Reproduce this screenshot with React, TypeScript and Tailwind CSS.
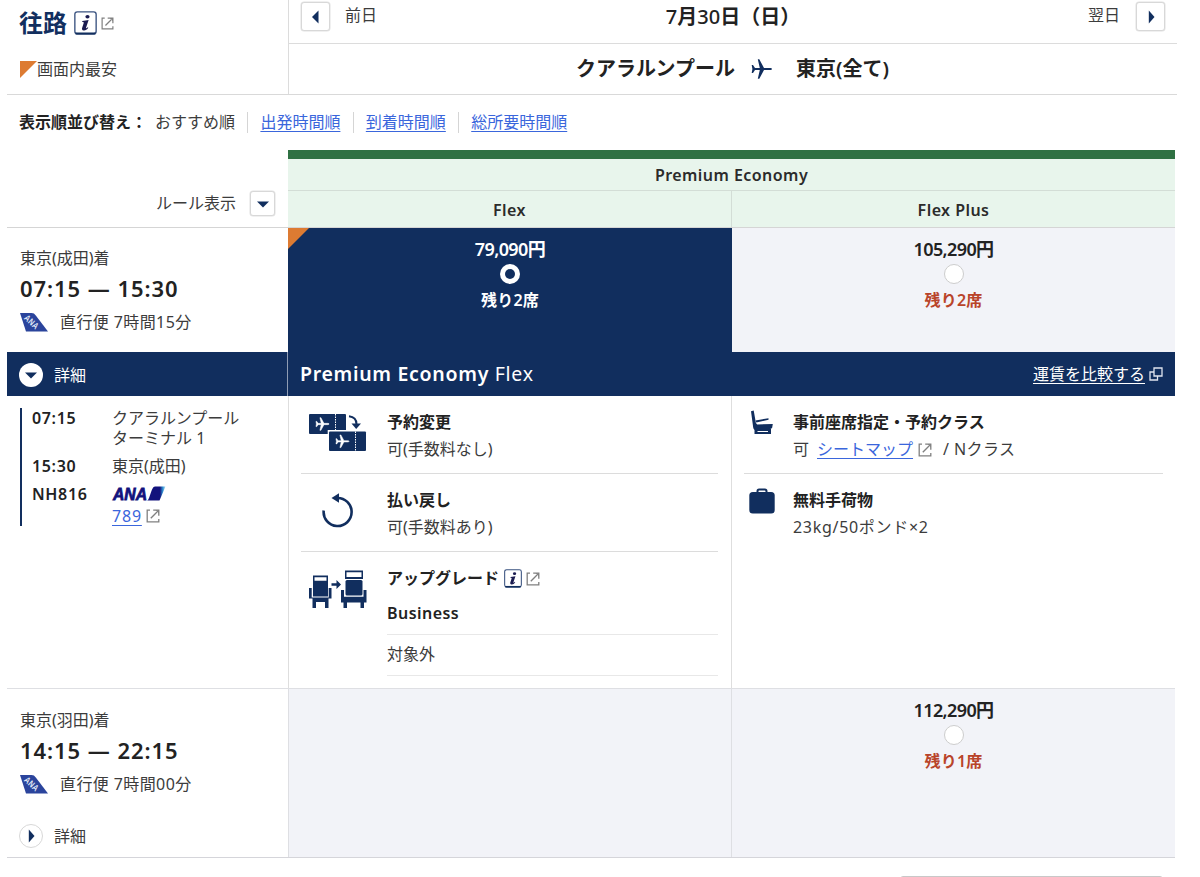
import React from "react";

const NAVY = "#112e5e";

function InfoIcon({ size }: { size: number }) {
  return (
    <svg width={size} height={size + 1} viewBox="0 0 22 23" className="shrink-0">
      <rect x="0.8" y="0.8" width="20.4" height="21" rx="2.4" fill="#fff" stroke="#3a5380" strokeWidth="1.3" />
      <path d="M1.5 21.6h19" stroke={NAVY} strokeWidth="2" />
      <ellipse cx="12.9" cy="5.6" rx="2" ry="1.700" fill="#1b1b50" />
      <path d="M8 9.600l6-.9-2.500 7.400c-.2.8.5.7 1.600-.5l.6.5c-1.300 2-2.900 2.800-4.500 2.600-1.500-.2-1.900-1.200-1.400-2.600l1.500-4.500c.2-.8-.2-1.100-1.500-1.100z" fill="#1b1b50" />
    </svg>
  );
}

function ExternalIcon({ size }: { size: number }) {
  return (
    <svg width={size} height={size} viewBox="0 0 14 14" className="shrink-0" fill="none" stroke="#808080" strokeWidth="1.300">
      <path d="M4 1.200H1.200v11.600h11.600V10" />
      <path d="M4.800 9.200L11 3" />
      <path d="M7.200 1.200h5.600v5.600" />
      <path d="M9.500 1.200h3.300v3.300z" fill="#808080" stroke="none" />
    </svg>
  );
}

function Arrow({ dir }: { dir: "left" | "right" | "down" }) {
  const d = { left: "M9.500 0.500v13L3 7z", right: "M4.800 0.500v13L10.500 7z", down: "M1 4.500h12L7 10.500z" }[dir];
  return (
    <svg width="14" height="14" viewBox="0 0 14 14">
      <path d={d} fill={NAVY} />
    </svg>
  );
}

function SquareButton({ dir, className }: { dir: "left" | "right" | "down"; className: string }) {
  return (
    <button className={"flex shrink-0 items-center justify-center rounded-[3px] border-[1.5px] border-[#d8d8d8] bg-white shadow-[0_0_0_0.5px_#e2e2e2] " + className}>
      <Arrow dir={dir} />
    </button>
  );
}

const PLANE = "M21 10c0-.6-1-1-2.200-1H13L8.300 0.300H6.800L8.800 9H4L2 6H.700L1.400 10 .7 14H2L4 11h4.800L6.800 19.700h1.500L13 11h5.800C20 11 21 10.600 21 10z";

function TailIcon() {
  return (
    <svg width="28" height="19" viewBox="0 0 28 19" className="shrink-0 overflow-visible">
      <path d="M0 0h11.500c2 0 3 .8 4.300 2.500L28 18.500H6z" fill="#2b449c" />
      <text x="0" y="0" transform="translate(3.400 5.800) rotate(42)" fontSize="9" fontWeight="700" fontFamily="Liberation Sans, sans-serif" fill="#dfe4f5" textLength="16.500" lengthAdjust="spacingAndGlyphs">ANA</text>
    </svg>
  );
}

function AnaLogo() {
  return (
    <svg width="56" height="17" viewBox="-1 -1 56 17" className="-ml-px -mt-px -mb-px overflow-visible">
      <defs>
        <linearGradient id="fin" x1="0" x2="1">
          <stop offset="0.700" stopColor="#12127c" />
          <stop offset="0.850" stopColor="#2f8fd0" />
          <stop offset="1" stopColor="#bfe6f8" />
        </linearGradient>
      </defs>
      <text x="1" y="14" fontSize="16.500" fontWeight="700" fontStyle="italic" fontFamily="Liberation Sans, sans-serif" fill="#12127c" stroke="#12127c" strokeWidth="0.800" textLength="34" lengthAdjust="spacingAndGlyphs">ANA</text>
      <path d="M35 14.500c3 0 4-14 8-14h10.500L47.500 14.500z" fill="url(#fin)" />
    </svg>
  );
}

function TicketsIcon() {
  return (
    <svg width="58" height="38" viewBox="0 0 58 38">
      <rect x="0" y="0" width="37" height="20" rx="1" fill={NAVY} />
      <path d="M26.500 0v20" stroke="#fff" strokeDasharray="1.500 1" />
      <path d={PLANE} fill="#fff" stroke="#fff" strokeWidth="0.800" transform="translate(6.500 3.500) scale(.65)" />
      <rect x="18.700" y="16" width="39.300" height="22" fill="#fff" />
      <rect x="20" y="17.500" width="37" height="19.500" rx="1" fill={NAVY} />
      <path d="M46.500 17.500v20" stroke="#fff" strokeDasharray="1.500 1" />
      <path d={PLANE} fill="#fff" stroke="#fff" strokeWidth="0.800" transform="translate(26.500 20.800) scale(.65)" />
      <path d="M40 2.300c4.800.5 7.500 3 7.500 8" fill="none" stroke={NAVY} strokeWidth="2" />
      <path d="M42.500 9.500h9.500L47.200 15z" fill={NAVY} />
    </svg>
  );
}

function RefundIcon() {
  return (
    <svg width="32" height="35" viewBox="0 0 32 35">
      <path d="M1.700 17.500A14 14 0 1 0 15 5" fill="none" stroke={NAVY} strokeWidth="2.600" />
      <path d="M9.500 5L17 .3v9.400z" fill={NAVY} />
    </svg>
  );
}

function UpgradeIcon() {
  return (
    <svg width="58" height="38" viewBox="0 0 58 38" fill={NAVY}>
      <path d="M4 5.500h15v21H4zM5.500 7.300v3.400h12V7.300z" fillRule="evenodd" />
      <path d="M0 18h2.700v9.500h17V18h2.800v10.500h-3V38H16v-6H7v6H3.500v-9.500H0z" />
      <path d="M36 .5h18v8.500H36zM37.500 2.300v4.700h15V2.300z" fillRule="evenodd" />
      <rect x="36.500" y="10" width="17" height="15.500" rx="1.500" />
      <path d="M32 20h3v6.800h19.500V20h3v12.500h-2.500V38h-3.500v-5.500H38V38h-3.500v-5.500H32z" />
      <path d="M22.500 13.200h5V10l4.500 4.500-4.500 4.500v-3.200h-5z" />
    </svg>
  );
}

function SeatIcon() {
  return (
    <svg width="24" height="25" viewBox="0 0 24 25" fill={NAVY}>
      <path d="M1 1.200l2.700-.7 2.200 12.500 1.300 1.500 15.600-.5-.7 4-3 1.700-13.600.2C4 19.900 3.500 19 3.200 17.500z" />
      <path d="M5.500 10.500l13-2.300v1.500L6.300 12.500z" />
      <path d="M4.500 19h16.500v5H4.500zM7.500 21v1h10.500v-1z" fillRule="evenodd" />
    </svg>
  );
}

function BagIcon() {
  return (
    <svg width="26" height="26" viewBox="0 0 26 26">
      <path d="M8.500 5.500V3.200c0-1 .6-1.700 1.600-1.700h5.800c1 0 1.600.7 1.600 1.700v2.300" fill="none" stroke={NAVY} strokeWidth="2" />
      <rect x="0.300" y="4" width="25.400" height="21.500" rx="3.500" fill={NAVY} />
    </svg>
  );
}

function Fare({ price, seats, selected }: { price: string; seats: string; selected?: boolean }) {
  return (
    <div className="flex flex-col items-center pt-2">
      <div className={"h-[26px] text-lg leading-[27px] font-semibold tracking-[-0.600px] " + (selected ? "text-white" : "text-[#222]")}>{price}</div>
      <div className={"mt-[1.500px] size-5 rounded-full bg-white " + (selected ? "flex items-center justify-center" : "border-[1.500px] border-[#cdcdcd]")}>
        {selected && <div className="size-[10px] rounded-full bg-[#112e5e]" />}
      </div>
      <div className={"mt-[3.500px] text-base leading-[26px] font-semibold tracking-[0.200px] " + (selected ? "text-white" : "text-[#b9442a]")}>{seats}</div>
    </div>
  );
}

function FlightInfo({ arrival, times, duration }: { arrival: string; times: string; duration: string }) {
  return (
    <div className="pl-[13px]">
      <div className="pt-[18px] text-base leading-6">{arrival}</div>
      <div className="mt-1 text-[22px] leading-7 font-semibold tracking-[0.950px] text-[#222]">{times}</div>
      <div className="mt-2 flex items-center gap-3 text-base leading-6 tracking-[0.400px]">
        <TailIcon />
        <span>{duration}</span>
      </div>
    </div>
  );
}

function Rule({ icon, iconClass, title, children }: { icon: React.ReactNode; iconClass: string; title: React.ReactNode; children: React.ReactNode }) {
  return (
    <div className="flex pt-[13px]">
      <div className={"shrink-0 " + iconClass}>{icon}</div>
      <div className="min-w-0 flex-1 text-base leading-[27px]">
        <div className="flex items-center font-bold text-[#222]">{title}</div>
        {children}
      </div>
    </div>
  );
}

const LINK = "text-[#3a66dc] underline underline-offset-[3px]";
const SEPARATOR = "mr-[12px] ml-[12.400px] h-[21px] w-px bg-[#d5d5d5]";
const STOP_LABEL = "w-20 font-semibold tracking-[0.650px] text-[#222]";

export default function App() {
  return (
    <div className="h-[877px] w-[1200px] overflow-hidden bg-white pl-[7px] font-['Noto_Sans','Noto_Sans_CJK_JP',sans-serif] text-base whitespace-nowrap text-[#3c3c3c]">
      <header className="flex h-[95px] w-[1170px] border-b border-[#d9d9d9]">
        <div className="w-[281px] shrink-0 pl-[13px]">
          <div className="flex h-[46px] items-center">
            <h1 className="-ml-px text-2xl leading-8 font-bold text-[#122f5f]">往路</h1>
            <span className="ml-[7px]"><InfoIcon size={23} /></span>
            <span className="ml-1"><ExternalIcon size={13} /></span>
          </div>
          <div className="flex h-[46px] items-center">
            <svg width="17" height="17" viewBox="0 0 17 17"><path d="M0 0h17L0 17z" fill="#dd7b32" /></svg>
            <span>画面内最安</span>
          </div>
        </div>
        <div className="flex-1 border-l border-[#dcdcdc]">
          <div className="flex h-[44px] items-start justify-between border-b border-[#dcdcdc] px-3 pt-[2px]">
            <div className="flex flex-1 items-start gap-[15px]">
              <SquareButton dir="left" className="h-[29px] w-[29px]" />
              <span className="leading-[26px]">前日</span>
            </div>
            <div className="text-xl leading-[29px] font-semibold text-[#222]"><span className="font-medium">7</span>月<span className="font-medium">30</span>日（日）</div>
            <div className="flex flex-1 items-start justify-end gap-4">
              <span className="leading-[26px]">翌日</span>
              <SquareButton dir="right" className="h-[29px] w-[29px]" />
            </div>
          </div>
          <div className="flex h-[50px] items-center justify-center pr-px text-xl font-semibold text-[#222]">
            <span>クアラルンプール</span>
            <svg width="22" height="20" viewBox="0 0 22 20" className="mr-[23px] ml-4"><path d={PLANE} fill={NAVY} /></svg>
            <span>東京(全て)</span>
          </div>
        </div>
      </header>

      <nav className="flex h-[54px] items-center pl-[13px]">
        <span className="-ml-px w-[136px] font-bold text-[#222]">表示順並び替え：</span>
        <span>おすすめ順</span>
        <span className={SEPARATOR} />
        <a className={LINK}>出発時間順</a>
        <span className={SEPARATOR} />
        <a className={LINK}>到着時間順</a>
        <span className={SEPARATOR} />
        <a className={LINK}>総所要時間順</a>
      </nav>

      <main className="mt-px w-[1168px]">
        <div className="flex h-[78px] border-b border-[#d5d5d5]">
          <div className="flex w-[281px] items-start justify-end gap-[14px] pt-[41px] pr-[13px]">
            <span className="leading-[25px]">ルール表示</span>
            <SquareButton dir="down" className="size-[25px]" />
          </div>
          <div className="flex-1 border-t-[9px] border-[#2f7143] bg-[#e8f5ec] text-center font-semibold tracking-[0.450px] text-[#2b2b2b]">
            <div className="h-8 border-b border-[#d3ddd6] leading-[32px]">Premium Economy</div>
            <div className="flex h-9 leading-[38px]">
              <div className="w-[444px] border-r border-[#d3ddd6]">Flex</div>
              <div className="flex-1">Flex Plus</div>
            </div>
          </div>
        </div>

        <div className="flex h-[124px]">
          <div className="w-[281px]"><FlightInfo arrival="東京(成田)着" times="07:15 — 15:30" duration="直行便 7時間15分" /></div>
          <div className="relative w-[444px] bg-[#112e5e]">
            <svg width="21" height="21" viewBox="0 0 21 21" className="absolute top-0 left-0"><path d="M0 0h21L0 21z" fill="#dd7b32" /></svg>
            <Fare price="79,090円" seats="残り2席" selected />
          </div>
          <div className="flex-1 bg-[#f2f3f8]"><Fare price="105,290円" seats="残り2席" /></div>
        </div>

        <div className="flex h-11 bg-[#112e5e] text-white">
          <div className="flex w-[281px] items-center border-r border-[#8f9cb4] pt-px pl-3">
            <span className="flex size-6 items-center justify-center rounded-full bg-white"><Arrow dir="down" /></span>
            <span className="ml-[11px]">詳細</span>
          </div>
          <div className="flex flex-1 items-center justify-between px-3">
            <div className="text-[19.500px] tracking-[0.700px]"><span className="font-semibold">Premium Economy</span> Flex</div>
            <div className="flex items-center">
              <a className="underline underline-offset-[3px]">運賃を比較する</a>
              <svg width="14" height="14" viewBox="0 0 14 14" className="ml-1" fill="none" stroke="#dfe4ee" strokeWidth="1.300"><path d="M5 1h8v8H5z" /><path d="M5 5H1v8h7.500V9" /></svg>
            </div>
          </div>
        </div>

        <div className="flex h-[293px] border-b border-[#dedfe3]">
          <div className="w-[281px] pt-3 pl-[13px]">
            <div className="h-[118px] border-l-2 border-[#122f5f] pl-[10px] text-base leading-5">
              <div className="flex"><span className={STOP_LABEL}>07:15</span><span>クアラルンプール<br />ターミナル 1</span></div>
              <div className="mt-2 flex"><span className={STOP_LABEL}>15:30</span><span>東京(成田)</span></div>
              <div className="mt-2 flex">
                <span className={STOP_LABEL}>NH816</span>
                <div>
                  <div className="pt-[2px]"><AnaLogo /></div>
                  <div className="mt-[5px] flex items-center gap-1"><a className={LINK + " tracking-[0.800px]"}>789</a><ExternalIcon size={14} /></div>
                </div>
              </div>
            </div>
          </div>
          <div className="w-[444px] border-x border-[#dedede] pr-[13px] pl-3">
            <div className="h-[78px] border-b border-[#dcdcdc]">
              <Rule iconClass="w-[86px] pl-2 pt-[5px]" icon={<TicketsIcon />} title="予約変更">可(手数料なし)</Rule>
            </div>
            <div className="h-[78px] border-b border-[#dcdcdc]">
              <Rule iconClass="w-[86px] pl-[21px] pt-[6px]" icon={<RefundIcon />} title="払い戻し">可(手数料あり)</Rule>
            </div>
            <Rule
              iconClass="w-[86px] pl-2 pt-[5px]"
              icon={<UpgradeIcon />}
              title={<><span>アップグレード</span><span className="ml-[5px]"><InfoIcon size={18} /></span><span className="ml-1"><ExternalIcon size={14} /></span></>}
            >
              <div className="mt-2 h-[35px] border-b border-[#e8e8e8] font-semibold tracking-[0.450px] text-[#222]">Business</div>
              <div className="h-[41px] border-b border-[#e8e8e8] leading-[38px]">対象外</div>
            </Rule>
          </div>
          <div className="flex-1 px-3">
            <div className="h-[78px] border-b border-[#dcdcdc]">
              <Rule iconClass="w-[49px] pl-[6px] pt-[1px]" icon={<SeatIcon />} title="事前座席指定・予約クラス">
                <div className="flex items-center">
                  <span>可</span><a className={LINK + " ml-2"}>シートマップ</a>
                  <span className="mr-[11px] ml-[5px]"><ExternalIcon size={14} /></span><span className="tracking-[0.400px]">/ Nクラス</span>
                </div>
              </Rule>
            </div>
            <Rule iconClass="w-[49px] pl-[5px] pt-[1px]" icon={<BagIcon />} title="無料手荷物"><span className="tracking-[0.700px]">23kg/50ポンド×2</span></Rule>
          </div>
        </div>

        <div className="flex h-[169px] border-b border-[#d5d5da]">
          <div className="w-[281px] pt-px">
            <FlightInfo arrival="東京(羽田)着" times="14:15 — 22:15" duration="直行便 7時間00分" />
            <div className="mt-7 flex items-center pl-3">
              <span className="flex size-6 items-center justify-center rounded-full border-[1.500px] border-[#d8d8d8] bg-white"><Arrow dir="right" /></span>
              <span className="ml-[11px]">詳細</span>
            </div>
          </div>
          <div className="w-[444px] border-x border-[#dedfe3] bg-[#f2f3f8]" />
          <div className="flex-1 bg-[#f2f3f8]"><Fare price="112,290円" seats="残り1席" /></div>
        </div>
      </main>

      <div className="mt-[18px] ml-[893px] h-5 w-[263px] rounded-[3px] border border-[#c8c8c8]" />
    </div>
  );
}
